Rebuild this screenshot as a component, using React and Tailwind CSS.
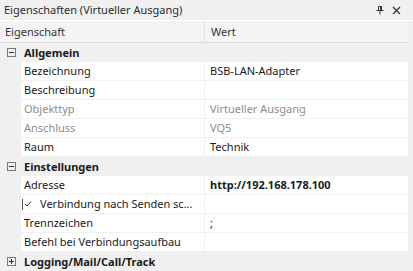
import React from 'react';

const Toggle = ({ open }) => (
  <span className="w-[9px] h-[9px] border border-[#7a7a7a] flex items-center justify-center bg-transparent relative">
    <span className="absolute w-[5px] h-px bg-[#333]" />
    {!open && <span className="absolute w-px h-[5px] bg-[#333]" />}
  </span>
);

const Group = ({ label, open = true }) => (
  <div className="h-[19px] flex items-center">
    <div className="w-[21px] flex justify-center pl-[1px]">
      <Toggle open={open} />
    </div>
    <span className="ml-[3px] font-bold text-[#1a1a1a]">{label}</span>
  </div>
);

const Row = ({ name, value, dim, bold, check }) => (
  <div className="h-[19px] flex ml-[21px] mr-[5px] bg-white border-b border-[#f0f0f0]">
    <div className={`w-[184px] shrink-0 border-r border-[#f0f0f0] flex items-center whitespace-nowrap ${check ? 'pl-[1px]' : 'pl-[3px]'} ${dim ? 'text-[#8c8c8c]' : 'text-[#1a1a1a]'}`}>
      {check && (
        <span className="w-[10px] h-[11px] mr-[8px] border-l border-[#555] flex items-center justify-center">
          <svg width="8" height="8" viewBox="0 0 8 8" fill="none" stroke="#333" strokeWidth="1">
            <path d="M1 4l2 2 4-4.5" />
          </svg>
        </span>
      )}
      <span>{name}</span>
    </div>
    <div className={`flex-1 flex items-center pl-[5px] whitespace-nowrap ${dim ? 'text-[#8c8c8c]' : 'text-[#1a1a1a]'} ${bold ? 'font-bold' : ''}`}>
      {value}
    </div>
  </div>
);

export default function App() {
  return (
    <div className="w-[413px] h-[271px] overflow-hidden bg-[#f0f0f0] text-[11px] leading-[16px] font-['Segoe_UI','Noto_Sans',sans-serif] text-[#1a1a1a]">
      {/* Title */}
      <div className="h-[21px] flex items-center justify-between pl-[4px] pr-[12px] border-b border-white">
        <span className="text-[#2b2b2b]">Eigenschaften (Virtueller Ausgang)</span>
        <div className="flex items-center gap-[8px]">
          <svg width="8" height="9" viewBox="0 0 8 9" fill="none" stroke="#333" strokeWidth="1">
            <path d="M2.5 0.5h3v4h-3z M0.5 4.5h7 M4 4.5v4" />
            <path d="M4.5 1v3" />
          </svg>
          <svg width="9" height="9" viewBox="0 0 9 9" fill="none" stroke="#333" strokeWidth="1.3">
            <path d="M1 1l7 7M8 1l-7 7" />
          </svg>
        </div>
      </div>

      {/* Header */}
      <div className="h-[22px] flex bg-[#f4f4f4] border-b border-[#dcdcdc] mr-[5px]">
        <div className="w-[205px] shrink-0 flex items-center pl-[5px] border-r border-[#e2e2e2] text-[#333]">Eigenschaft</div>
        <div className="flex-1 flex items-center pl-[6px] text-[#333]">Wert</div>
      </div>

      <Group label="Allgemein" />
      <Row name="Bezeichnung" value="BSB-LAN-Adapter" />
      <Row name="Beschreibung" value="" />
      <Row name="Objekttyp" value="Virtueller Ausgang" dim />
      <Row name="Anschluss" value="VQ5" dim />
      <Row name="Raum" value="Technik" />

      <Group label="Einstellungen" />
      <Row name="Adresse" value="http://192.168.178.100" bold />
      <Row name="Verbindung nach Senden sc..." value="" check />
      <Row name="Trennzeichen" value=";" />
      <Row name="Befehl bei Verbindungsaufbau" value="" />

      <Group label="Logging/Mail/Call/Track" open={false} />
    </div>
  );
}
